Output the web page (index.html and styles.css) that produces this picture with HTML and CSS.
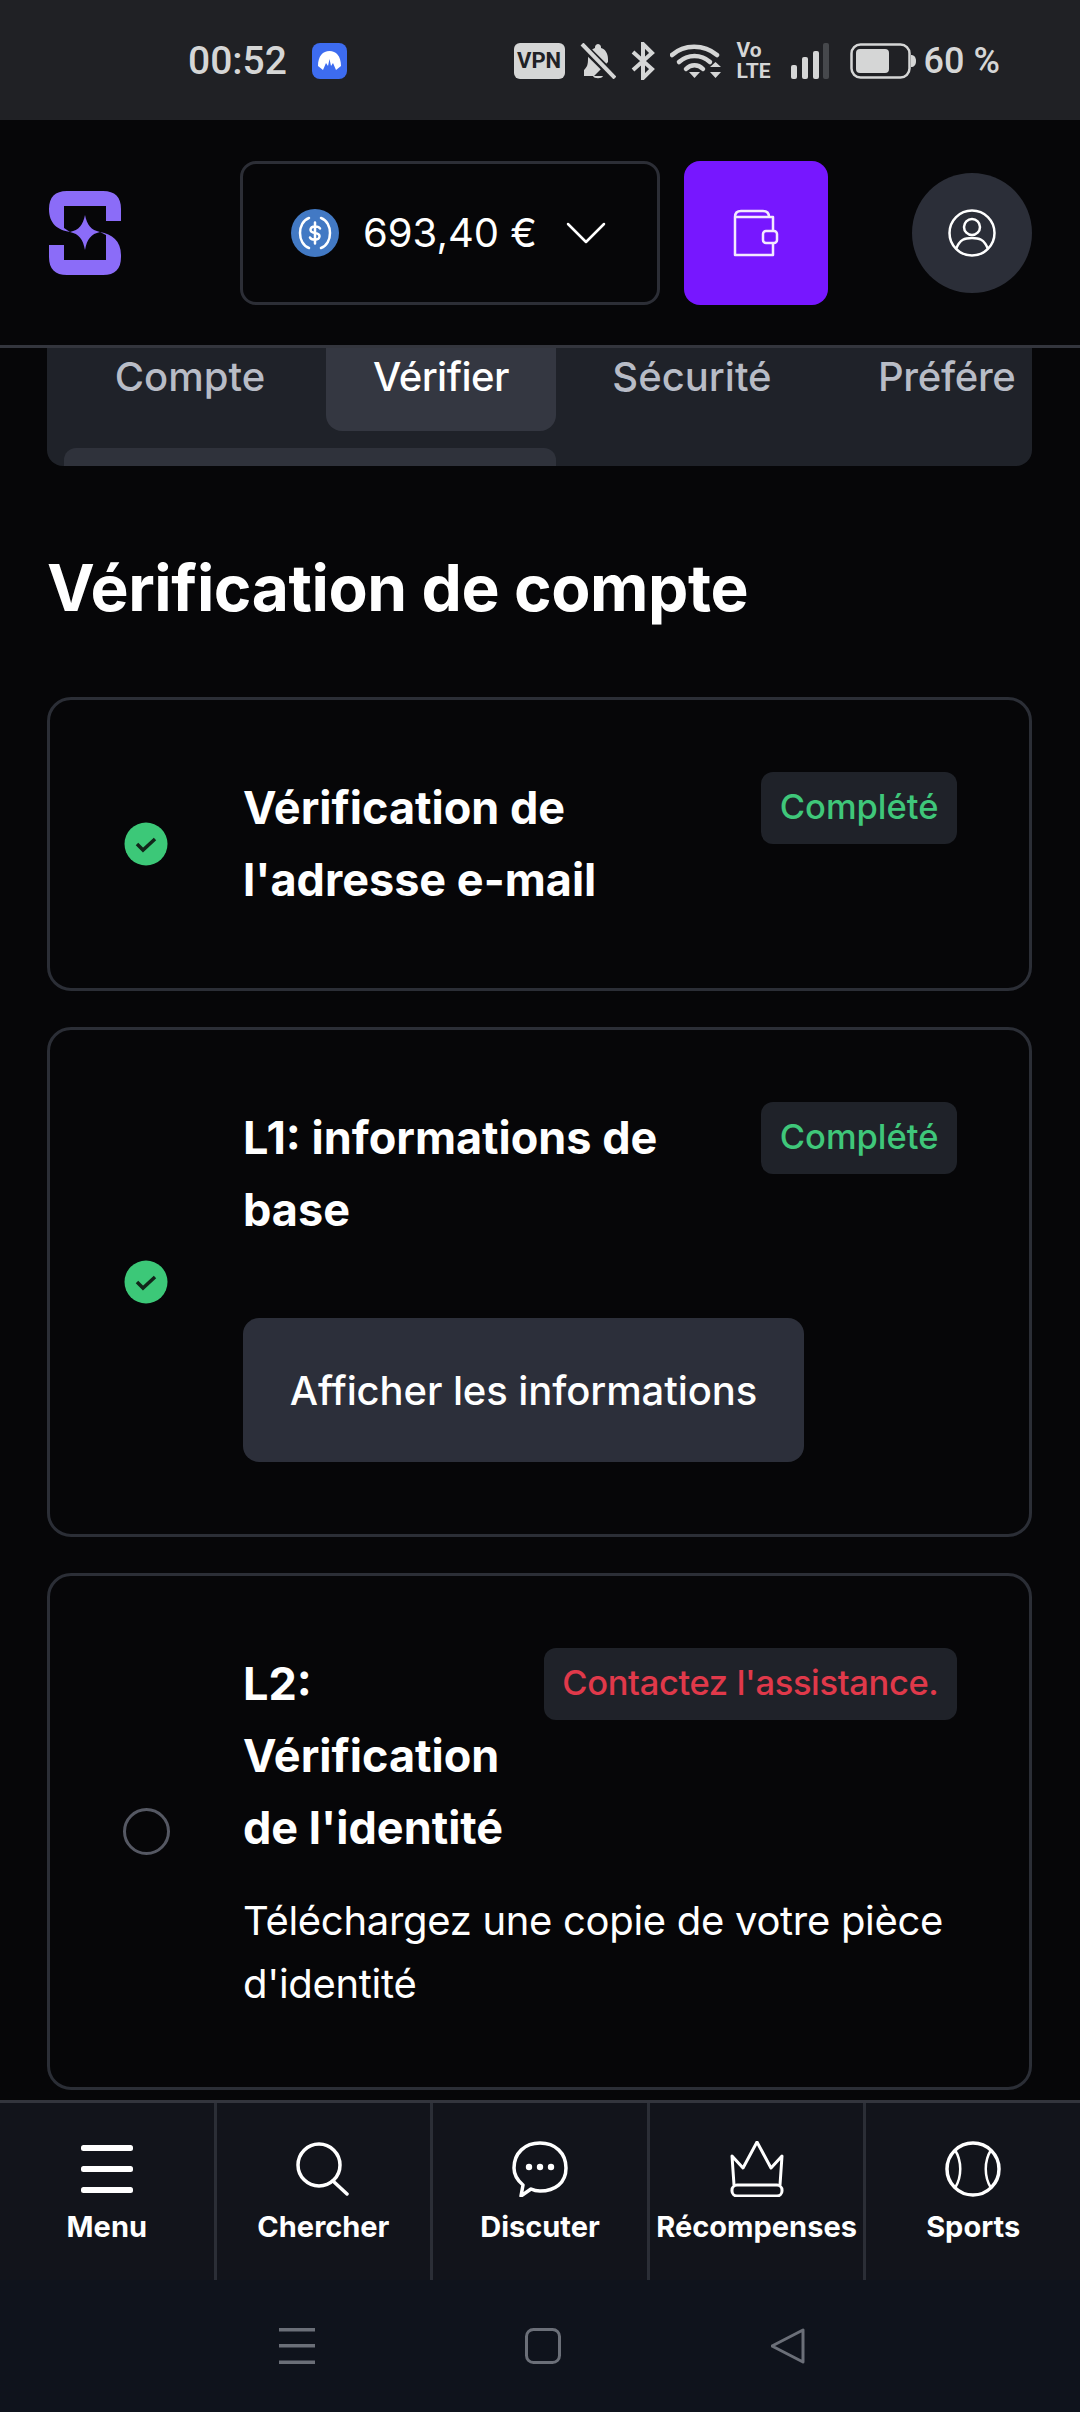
FILE: index.html
```html
<!DOCTYPE html>
<html lang="fr">
<head>
    <meta charset="UTF-8">
    <meta name="viewport" content="width=device-width, initial-scale=1.0">
    <title>Vérification de compte</title>
    <link rel="stylesheet" href="styles.css">
</head>
<body>
    <div class="status-bar">
        <span class="status-time">00:52</span>
        <svg class="nord-icon" width="35" height="36" viewBox="0 0 35 36">
            <rect width="35" height="36" rx="8" fill="#3d6cf0"/>
            <path d="M6 23C6 13 11 8 17.500 8S29 13 29 23L24 27L21 20L19 23L17.500 16L16 23L14 20L11 27Z" fill="#fff"/>
        </svg>
        <div class="status-right">
            <span class="vpn-chip">VPN</span>
            <svg width="36" height="36" viewBox="0 0 36 36" fill="#d5d6d6">
                <path d="M4 27C7 24 8 22 8 16C8 9 12 6 15 5V4C15 2 17 1 18 1S21 2 21 4V5C25 6 28 10 28 16V19L14 33H4Z" />
                <path d="M13 33H23C22 36 14 36 13 33Z"/>
                <path d="M1 1L35 35" stroke="#202125" stroke-width="8"/>
                <path d="M2 1L35 35" stroke="#d5d6d6" stroke-width="4"/>
            </svg>
            <svg width="24" height="38" viewBox="0 0 24 38" fill="none" stroke="#d5d6d6" stroke-width="4">
                <path d="M2 10L21 27L12 36V2L21 11L2 28"/>
            </svg>
            <svg width="52" height="36" viewBox="0 0 52 36" fill="none" stroke="#d5d6d6" stroke-width="4.500" stroke-linecap="round">
                <path d="M2 12C14 1 34 1 47 12"/>
                <path d="M9 19C18 11 31 11 40 19"/>
                <path d="M16 26C21 21 28 21 33 26"/>
                <path d="M19 29L24.500 35L30 29Z" fill="#d5d6d6" stroke="none"/>
                <path d="M40 24L45.500 19L51 24ZM40 29H51L45.500 35Z" fill="#d5d6d6" stroke="none"/>
            </svg>
            <span class="volte">Vo<br>LTE</span>
            <svg class="signal-icon" width="40" height="36" viewBox="0 0 40 36" fill="#d5d6d6">
                <rect x="1" y="22" width="6" height="14" rx="2"/>
                <rect x="12" y="14" width="6" height="22" rx="2"/>
                <rect x="23" y="8" width="6" height="28" rx="2"/>
                <rect x="33" y="0" width="6" height="36" rx="2" fill="#46484c"/>
            </svg>
            <svg width="66" height="36" viewBox="0 0 66 36">
                <rect x="1.500" y="1.500" width="58" height="33" rx="9" fill="none" stroke="#d5d6d6" stroke-width="2.500"/>
                <rect x="6" y="6" width="33" height="24" rx="4" fill="#d5d6d6"/>
                <path d="M61 12C64 12 66 14 66 18S64 24 61 24Z" fill="#d5d6d6"/>
            </svg>
            <span class="status-pct">60 %</span>
        </div>
    </div>

    <div class="header">
        <svg class="logo" width="72" height="84" viewBox="0 0 72 84" fill="#8b6cf8">
            <path d="M18 0H54C66 0 72 6 72 18V30H57V15H15V37L21 41C9 39 0 33 0 18C0 6 6 0 18 0Z"/>
            <path d="M0 54H15V69H57V44L51 41C63 43 72 50 72 64V66C72 78 66 84 54 84H18C6 84 0 78 0 66Z"/>
            <path d="M36 24C38 34 42 39 51 41C42 43 38 48 36 59C34 48 30 43 21 41C30 39 34 34 36 24Z"/>
        </svg>
        <div class="balance">
            <svg width="48" height="48" viewBox="0 0 48 48" fill="none">
                <circle cx="24" cy="24" r="24" fill="#4279c4"/>
                <path d="M18 9C6 13 6 35 18 39M30 9C42 13 42 35 30 39" stroke="#fff" stroke-width="2.500" stroke-linecap="round"/>
                <path d="M29 19.500C28 17 20 16 19.500 20.500C19 26 29 22 28.500 27.500C28 32 20 31 19 28.500M24 13.500V34.500" stroke="#fff" stroke-width="2.500" stroke-linecap="round"/>
            </svg>
            <span class="balance-amount">693,40 €</span>
            <svg width="40" height="22" viewBox="0 0 40 22" fill="none" stroke="#fff" stroke-width="2.500" stroke-linecap="round" stroke-linejoin="round">
                <path d="M2 2L20 20L38 2"/>
            </svg>
        </div>
        <div class="wallet-btn">
            <svg width="46" height="48" viewBox="0 0 46 48" fill="none" stroke="#f3e9ff" stroke-width="2.500" stroke-linejoin="round">
                <path d="M2 8C2 4 4 2 8 2H30C34 2 36 4 36 8"/>
                <path d="M2 8V46H40V34M2 8H40V22"/>
                <rect x="30" y="22" width="14" height="12" rx="3"/>
            </svg>
        </div>
        <div class="avatar">
            <svg width="48" height="48" viewBox="0 0 48 48" fill="none" stroke="#fff" stroke-width="2.500">
                <circle cx="24" cy="24" r="22.500"/>
                <circle cx="24" cy="18" r="8"/>
                <path d="M8 40C12 30 17 29 24 29S36 30 40 40"/>
            </svg>
        </div>
    </div>

    <div class="main">
        <div class="tabs-panel">
            <div class="tabs">
                <div class="tab">Compte</div>
                <div class="tab tab-active">Vérifier</div>
                <div class="tab">Sécurité</div>
                <div class="tab tab-last">Préférences</div>
            </div>
            <div class="tabs-thumb"></div>
        </div>

        <h1 class="page-title">Vérification de compte</h1>

        <div class="card">
            <div class="card-icon">
                <svg width="44" height="44" viewBox="0 0 44 44">
                    <circle cx="22" cy="22" r="21.500" fill="#3cc878"/>
                    <path d="M13 22L19 28L31 17" fill="none" stroke="#12251a" stroke-width="3.500"/>
                </svg>
            </div>
            <div class="card-body">
                <div class="card-top">
                    <h2 class="card-title">Vérification de l'adresse e-mail</h2>
                    <span class="chip chip-ok">Complété</span>
                </div>
            </div>
        </div>

        <div class="card">
            <div class="card-icon">
                <svg width="44" height="44" viewBox="0 0 44 44">
                    <circle cx="22" cy="22" r="21.500" fill="#3cc878"/>
                    <path d="M13 22L19 28L31 17" fill="none" stroke="#12251a" stroke-width="3.500"/>
                </svg>
            </div>
            <div class="card-body">
                <div class="card-top">
                    <h2 class="card-title">L1: informations de base</h2>
                    <span class="chip chip-ok">Complété</span>
                </div>
                <button class="info-btn">Afficher les informations</button>
            </div>
        </div>

        <div class="card">
            <div class="card-icon">
                <div class="circle-empty"></div>
            </div>
            <div class="card-body">
                <div class="card-top">
                    <h2 class="card-title">L2: Vérification de l'identité</h2>
                    <span class="chip chip-bad">Contactez l'assistance.</span>
                </div>
                <p class="card-desc">Téléchargez une copie de votre pièce d'identité</p>
            </div>
        </div>
    </div>

    <div class="bottom-nav">
        <div class="nav-item">
            <div class="nav-icon">
                <svg width="52" height="48" viewBox="0 0 52 48" fill="#fff">
                    <rect y="0" width="52" height="6" rx="2.500"/>
                    <rect y="21" width="52" height="6" rx="2.500"/>
                    <rect y="42" width="52" height="6" rx="2.500"/>
                </svg>
            </div>
            <span>Menu</span>
        </div>
        <div class="nav-item">
            <div class="nav-icon">
                <svg width="54" height="54" viewBox="0 0 54 54" fill="none" stroke="#fff" stroke-width="3.500" stroke-linecap="round">
                    <circle cx="23" cy="23" r="21"/>
                    <path d="M37 39L51 52"/>
                </svg>
            </div>
            <span>Chercher</span>
        </div>
        <div class="nav-item">
            <div class="nav-icon">
                <svg width="56" height="56" viewBox="0 0 56 56" fill="none">
                    <path d="M9 55L11 44C5 39 2 34 2 27C2 12 13 2 28 2S54 12 54 27S43 50 28 50C24 50 21 49 19 48Z" stroke="#fff" stroke-width="3.500" stroke-linejoin="round"/>
                    <circle cx="17" cy="26" r="3.200" fill="#fff"/>
                    <circle cx="28" cy="26" r="3.200" fill="#fff"/>
                    <circle cx="39" cy="26" r="3.200" fill="#fff"/>
                </svg>
            </div>
            <span>Discuter</span>
        </div>
        <div class="nav-item">
            <div class="nav-icon">
                <svg width="54" height="56" viewBox="0 0 54 56" fill="none" stroke="#fff" stroke-width="3" stroke-linejoin="round">
                    <path d="M4 44L2 15L13 27L27 1L41 27L52 15L50 44"/>
                    <rect x="2" y="44" width="50" height="11" rx="5"/>
                </svg>
            </div>
            <span>Récompenses</span>
        </div>
        <div class="nav-item">
            <div class="nav-icon">
                <svg width="56" height="56" viewBox="0 0 56 56" fill="none" stroke="#fff" stroke-width="3.500">
                    <circle cx="28" cy="28" r="26"/>
                    <path d="M10 9C17 20 17 36 10 47M46 9C39 20 39 36 46 47" stroke-width="2.500"/>
                </svg>
            </div>
            <span>Sports</span>
        </div>
    </div>

    <div class="system-nav">
        <svg width="36" height="36" viewBox="0 0 36 36" fill="#6b6f78">
            <rect y="0" width="36" height="3.500"/>
            <rect y="16" width="36" height="3.500"/>
            <rect y="32.500" width="36" height="3.500"/>
        </svg>
        <svg width="36" height="36" viewBox="0 0 36 36" fill="none" stroke="#6b6f78" stroke-width="3">
            <rect x="1.500" y="1.500" width="33" height="33" rx="7"/>
        </svg>
        <svg width="36" height="36" viewBox="0 0 36 36" fill="none" stroke="#6b6f78" stroke-width="3" stroke-linejoin="round">
            <path d="M32 2V34L1 18Z"/>
        </svg>
    </div>
</body>
</html>
```

FILE: styles.css
```css
* {
    margin: 0;
    padding: 0;
    box-sizing: border-box;
}
body {
    width: 1080px;
    height: 2412px;
    display: flex;
    flex-direction: column;
    overflow: hidden;
    background: #060608;
    color: white;
    font-family: Inter, "Liberation Sans", sans-serif;
}
.status-bar {
    height: 120px;
    flex-shrink: 0;
    display: flex;
    align-items: center;
    padding: 2px 80px 0 188px;
    background: #202125;
    color: #d5d6d6;
    font-family: Roboto, sans-serif;
}
.status-time {
    font-size: 39px;
    font-weight: 500;
}
.nord-icon {
    margin-left: 25px;
}
.status-right {
    margin-left: auto;
    display: flex;
    align-items: center;
    gap: 15px;
}
.vpn-chip {
    width: 51px;
    height: 36px;
    background: #d5d6d6;
    color: #202125;
    border-radius: 6px;
    font-size: 22px;
    font-weight: 700;
    line-height: 36px;
    text-align: center;
}
.volte {
    font-size: 21px;
    font-weight: 700;
    line-height: 21px;
    width: 32px;
}
.signal-icon {
    margin: 0 5px 0 6px;
}
.status-pct {
    font-size: 36px;
    font-weight: 500;
    margin-left: -7px;
}
.header {
    height: 228px;
    flex-shrink: 0;
    display: flex;
    align-items: center;
    padding: 0 48px 0 49px;
    background: #060608;
    border-bottom: 3px solid #33353d;
}
.logo {
    margin-right: 119px;
}
.balance {
    width: 420px;
    height: 144px;
    display: flex;
    align-items: center;
    padding-left: 48px;
    border: 3px solid #2c2e36;
    border-radius: 16px;
    font-size: 40px;
}
.balance-amount {
    margin: 0 29px 0 24px;
}
.wallet-btn {
    width: 144px;
    height: 144px;
    margin-left: 24px;
    display: flex;
    align-items: center;
    justify-content: center;
    background: #7717ff;
    border-radius: 16px;
}
.avatar {
    width: 120px;
    height: 120px;
    margin-left: auto;
    display: flex;
    align-items: center;
    justify-content: center;
    background: #2b2e38;
    border-radius: 50%;
}
.main {
    flex: 1;
    overflow: hidden;
    padding: 0 48px 0 47px;
}
.tabs-panel {
    height: 118px;
    background: #1f2229;
    border-radius: 0 0 16px 16px;
    overflow: hidden;
    padding: 0 17px;
}
.tabs {
    display: flex;
    gap: 10px;
    overflow: hidden;
    height: 83px;
}
.tab {
    flex-shrink: 0;
    width: 252px;
    height: 83px;
    line-height: 58px;
    text-align: center;
    font-size: 40px;
    font-weight: 500;
    color: #b8bcc6;
    border-radius: 0 0 16px 16px;
}
.tab-active {
    width: 230px;
    background: #343741;
    color: white;
    letter-spacing: -0.5px;
}
.tab-last {
    width: auto;
    padding-left: 50px;
    letter-spacing: -0.3px;
}
.tabs-thumb {
    width: 492px;
    height: 18px;
    margin-top: 17px;
    background: #2f323b;
    border-radius: 12px 12px 0 0;
}
.page-title {
    margin-top: 86px;
    margin-bottom: 73px;
    font-size: 64px;
    line-height: 72px;
    font-weight: 700;
    letter-spacing: -0.4px;
}
.card {
    display: flex;
    align-items: center;
    gap: 73px;
    padding: 72px;
    margin-bottom: 36px;
    border: 3px solid #2b2e36;
    border-radius: 24px;
}
.card-icon {
    width: 48px;
    flex-shrink: 0;
    display: flex;
    justify-content: center;
}
.circle-empty {
    width: 47px;
    height: 47px;
    border: 3px solid #555863;
    border-radius: 50%;
}
.card-body {
    flex: 1;
    display: flex;
    flex-direction: column;
    align-items: flex-start;
}
.card-top {
    width: 100%;
    display: flex;
    align-items: flex-start;
    justify-content: space-between;
    gap: 24px;
}
.card-title {
    font-size: 45px;
    line-height: 72px;
    font-weight: 700;
}
.chip {
    flex-shrink: 0;
    height: 72px;
    padding: 0 18.500px;
    line-height: 70px;
    font-size: 34.500px;
    font-weight: 500;
    background: #1f2229;
    border-radius: 12px;
}
.chip-ok {
    color: #3fc77a;
}
.chip-bad {
    color: #e0394a;
    letter-spacing: -0.35px;
}
.info-btn {
    height: 144px;
    width: 561px;
    margin-top: 72px;
    background: #2c2f3a;
    color: white;
    border: none;
    border-radius: 16px;
    font-family: inherit;
    font-size: 40px;
    font-weight: 500;
    letter-spacing: -0.1px;
}
.card-desc {
    margin-top: 25px;
    font-size: 40px;
    line-height: 63px;
    letter-spacing: -0.3px;
}
.bottom-nav {
    height: 180px;
    flex-shrink: 0;
    display: flex;
    background: #12141b;
    border-top: 3px solid #33353d;
}
.nav-item {
    flex: 1;
    display: flex;
    flex-direction: column;
    align-items: center;
    font-size: 29px;
    font-weight: 700;
    white-space: nowrap;
    border-right: 3px solid #2b2e36;
}
.nav-item:last-child {
    border-right: none;
}
.nav-icon {
    height: 56px;
    margin-top: 38px;
    margin-bottom: 12px;
    display: flex;
    align-items: center;
}
.system-nav {
    height: 132px;
    flex-shrink: 0;
    display: flex;
    align-items: flex-start;
    justify-content: center;
    gap: 210px;
    padding: 48px 0 0 6px;
    background: #0f131c;
}
```
